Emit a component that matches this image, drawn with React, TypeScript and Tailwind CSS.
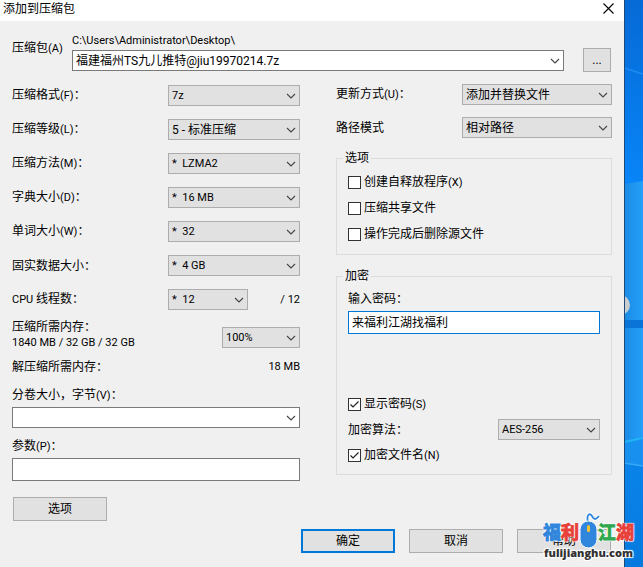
import { useId, type ReactNode } from "react";

/* Latin letters and digits are set one step smaller than the Han characters. */
function T({ children }: { children: string }) {
  return (
    <>
      {children.split(/([\x20-\x7e]+)/).map((run, i) =>
        i % 2 === 1 ? (
          <span key={i} className="text-[11px]">
            {run}
          </span>
        ) : (
          run
        ),
      )}
    </>
  );
}

function Chevron() {
  return (
    <svg className="h-[6px] w-[10px]" viewBox="0 0 10 6" fill="none" stroke="#444" strokeWidth="1.1" aria-hidden="true">
      <path d="M1 1 5 5 9 1" />
    </svg>
  );
}

function Select({ id, value, label, className = "" }: { id?: string; value: string; label?: string; className?: string }) {
  const latin = /^[\x20-\x7e\xa0]+$/.test(value);
  return (
    <span className={`relative block shrink-0 ${className}`}>
      <select
        id={id}
        aria-label={label}
        className={`block h-[21px] w-full appearance-none border border-[#adadad] bg-[#e1e1e1] pr-5 pl-[3px] ${latin ? "text-[11px]" : "text-[12px]"} leading-4`}
      >
        <option>{value}</option>
      </select>
      <span className="pointer-events-none absolute inset-y-0 right-1 flex items-center">
        <Chevron />
      </span>
    </span>
  );
}

function Combo({ id, value = "" }: { id: string; value?: string }) {
  return (
    <div className="flex h-[21px] items-center border border-[#7a7a7a] bg-white">
      <input id={id} defaultValue={value} className="h-4 min-w-0 flex-1 pl-[3px] leading-4 outline-none" />
      <button type="button" aria-label="展开" className="flex h-full items-center px-[3px]">
        <Chevron />
      </button>
    </div>
  );
}

function Field({ label, value, width = "w-[132px]", suffix }: { label: string; value: string; width?: string; suffix?: string }) {
  const id = useId();
  return (
    <div className="flex h-[21px] items-center">
      <label htmlFor={id} className="w-[156px] shrink-0">
        <T>{label}</T>
      </label>
      <Select id={id} value={value} className={width} />
      {suffix && <span className="flex-1 text-right text-[11px]">{suffix}</span>}
    </div>
  );
}

function Check({ label, checked = false }: { label: string; checked?: boolean }) {
  return (
    <label className="flex h-4 items-center gap-[3px]">
      <span className="relative block size-[13px]">
        <input
          type="checkbox"
          defaultChecked={checked}
          className="peer block size-[13px] appearance-none border border-[#333] bg-white"
        />
        <svg
          className="pointer-events-none absolute inset-0 hidden size-[13px] peer-checked:block"
          viewBox="0 0 13 13"
          fill="none"
          stroke="#222"
          strokeWidth="1.2"
          aria-hidden="true"
        >
          <path d="M2.5 6.5 5 9 10.5 3.5" />
        </svg>
      </span>
      <span>
        <T>{label}</T>
      </span>
    </label>
  );
}

function Group({ title, className = "", children }: { title: string; className?: string; children: ReactNode }) {
  return (
    <fieldset className={`border border-[#dcdcdc] px-[11px] ${className}`}>
      <legend className="-ml-[5px] px-0.5">{title}</legend>
      {children}
    </fieldset>
  );
}

function PushButton({ children, primary = false }: { children: ReactNode; primary?: boolean }) {
  return (
    <button
      type="button"
      className={`flex h-6 w-[94px] items-center justify-center bg-[#e1e1e1] leading-4 ${primary ? "border-2 border-[#0078d7]" : "border border-[#adadad]"}`}
    >
      {children}
    </button>
  );
}

function Desktop() {
  return (
    <div className="relative w-[19px] shrink-0 overflow-hidden bg-[#1c93f2]">
      <svg className="absolute inset-0 h-full w-full" viewBox="0 0 19 567" preserveAspectRatio="none" aria-hidden="true">
        <defs>
          <linearGradient id="sky" x1="0" y1="0" x2="0" y2="1">
            <stop offset="0" stopColor="#066ad6" />
            <stop offset="1" stopColor="#0885f8" />
          </linearGradient>
          <linearGradient id="pane" x1="0" y1="0" x2="1" y2="0">
            <stop offset="0" stopColor="#1b8ae4" />
            <stop offset="1" stopColor="#24a0fa" />
          </linearGradient>
          <linearGradient id="floor" x1="0" y1="0" x2="0" y2="1">
            <stop offset="0" stopColor="#0a84ea" />
            <stop offset="1" stopColor="#0579de" />
          </linearGradient>
        </defs>
        <rect width="19" height="184" fill="url(#sky)" />
        <path d="M0 68 19 74" stroke="#1f8cf0" strokeWidth="1.5" />
        <path d="M0 184 19 181V320H0Z" fill="url(#pane)" />
        <rect y="320" width="19" height="8" fill="#0a74d8" />
        <rect y="328" width="19" height="113" fill="url(#pane)" />
        <path d="M0 441 19 438V466L0 462Z" fill="#1890f0" />
        <path d="M0 463 19 466V567H0Z" fill="url(#floor)" />
        <path d="M0 442 19 438" stroke="#22b4f4" strokeWidth="2" />
        <path d="M0 463 19 466" stroke="#35a8f8" strokeWidth="1.5" />
        <circle cx="-4" cy="305" r="10" fill="#c9cdd0" />
        <rect width="1" height="567" fill="#1d4a78" />
      </svg>
    </div>
  );
}

function Watermark() {
  return (
    <div className="pointer-events-none absolute right-[9px] bottom-[6px] flex flex-col items-center font-bold [text-shadow:1px_1px_1px_#fff,-1px_-1px_1px_#fff,1px_-1px_1px_#fff,-1px_1px_1px_#fff]">
      <div className="flex h-8 items-end text-[18px] leading-6 [-webkit-text-stroke:1px_currentColor]">
        <span className="text-[#2f86dc]">福</span>
        <span className="text-[#e8413a]">利</span>
        <svg className="-mb-1 h-[36px] w-[19px] overflow-visible" viewBox="0 0 19 36" aria-hidden="true">
          <path d="M9 9C7 2 11-1 13 3S17 7 20 3" fill="none" stroke="#fff" strokeWidth="4" />
          <path d="M9 9C7 2 11-1 13 3S17 7 20 3" fill="none" stroke="#2f86dc" strokeWidth="1.8" />
          <rect x="1" y="8" width="17" height="27" rx="8.5" fill="#2f86dc" stroke="#fff" />
          <rect x="8" y="12" width="3" height="7" rx="1.5" fill="#f5c332" />
        </svg>
        <span className="text-[#2fa84f]">江</span>
        <span className="text-[#e8413a]">湖</span>
      </div>
      <span className="font-['Open_Sans',sans-serif] text-[11px] leading-4 font-extrabold text-[#333]">fulijianghu.com</span>
    </div>
  );
}

export default function App() {
  return (
    <div className="relative flex min-h-screen font-[Roboto,'Noto_Sans_CJK_SC',sans-serif] text-[12px] leading-4 text-black">
      <main className="flex min-w-0 flex-1 flex-col bg-[#f0f0f0]">
        <header className="flex h-[21px] items-center justify-between bg-white pr-[10px] pb-1 pl-[3px]">
          <h1>添加到压缩包</h1>
          <button type="button" aria-label="关闭">
            <svg className="size-[11px]" viewBox="0 0 11 11" stroke="#000" strokeWidth="1.1" aria-hidden="true">
              <path d="M.5.5 10.5 10.5M10.5.5.5 10.5" />
            </svg>
          </button>
        </header>

        <form className="flex flex-1 flex-col px-3 pt-3 pb-[14px]">
          <div className="flex items-end">
            <label htmlFor="archive" className="mb-[14px] w-[60px] shrink-0">
              <T>压缩包(A)</T>
            </label>
            <div className="min-w-0 flex-1">
              <p className="mb-px text-[11px]">C:\Users\Administrator\Desktop\</p>
              <Combo id="archive" value="福建福州TS九儿推特@jiu19970214.7z" />
            </div>
            <button type="button" className="-mb-px ml-[19px] mr-px h-6 w-7 border border-[#adadad] bg-[#e1e1e1] leading-4">
              ...
            </button>
          </div>

          <div className="mt-[13px] flex gap-9">
            <section className="flex min-w-0 flex-[288] flex-col pt-px">
              <div className="flex flex-col gap-[13px]">
                <Field label="压缩格式(F)：" value="7z" />
                <Field label="压缩等级(L)：" value="5 - 标准压缩" />
                <Field label="压缩方法(M)：" value={"*\u00a0\u00a0LZMA2"} />
                <Field label="字典大小(D)：" value={"*\u00a0\u00a016 MB"} />
                <Field label="单词大小(W)：" value={"*\u00a0\u00a032"} />
                <Field label="固实数据大小：" value={"*\u00a0\u00a04 GB"} />
                <Field label="CPU 线程数：" value={"*\u00a0\u00a012"} width="w-[80px]" suffix="/ 12" />
              </div>
              <div className="mt-[9px] flex items-start justify-between">
                <div>
                  <p>压缩所需内存：</p>
                  <p className="text-[11px]">1840 MB / 32 GB / 32 GB</p>
                </div>
                <Select label="压缩所需内存" value="100%" className="mt-2 w-[78px]" />
              </div>
              <p className="mt-2 flex justify-between">
                <span>解压缩所需内存：</span>
                <span className="text-[11px]">18 MB</span>
              </p>
              <label htmlFor="volume" className="mt-3 mb-[3px]">
                <T>分卷大小，字节(V)：</T>
              </label>
              <Combo id="volume" />
              <label htmlFor="params" className="mt-[10px] mb-[3px]">
                <T>参数(P)：</T>
              </label>
              <input id="params" className="h-[23px] border border-[#7a7a7a] bg-white px-[3px]" />
              <div className="mt-4 ml-px">
                <PushButton>选项</PushButton>
              </div>
            </section>

            <section className="flex min-w-0 flex-[276] flex-col">
              <div className="flex items-center justify-between">
                <label htmlFor="update">
                  <T>更新方式(U)：</T>
                </label>
                <Select id="update" value="添加并替换文件" className="w-[150px]" />
              </div>
              <div className="mt-3 flex items-center justify-between">
                <label htmlFor="paths">路径模式</label>
                <Select id="paths" value="相对路径" className="w-[150px]" />
              </div>
              <Group title="选项" className="mt-3 pt-2 pb-3">
                <div className="flex flex-col gap-[10px]">
                  <Check label="创建自释放程序(X)" />
                  <Check label="压缩共享文件" />
                  <Check label="操作完成后删除源文件" />
                </div>
              </Group>
              <Group title="加密" className="mt-[13px] pt-[7px] pb-[11px]">
                <label htmlFor="password" className="block">
                  输入密码：
                </label>
                <input
                  id="password"
                  defaultValue="来福利江湖找福利"
                  className="mt-1 mb-[62px] block h-[23px] w-full border border-[#0078d7] bg-white px-[3px] pb-0.5 leading-4 outline-none"
                />
                <Check label="显示密码(S)" checked />
                <div className="my-[7px] flex items-center justify-between">
                  <label htmlFor="method">加密算法：</label>
                  <Select id="method" value="AES-256" className="w-[102px]" />
                </div>
                <Check label="加密文件名(N)" checked />
              </Group>
            </section>
          </div>

          <footer className="mt-2 mr-px flex justify-end gap-[14px]">
            <PushButton primary>确定</PushButton>
            <PushButton>取消</PushButton>
            <PushButton>帮助</PushButton>
          </footer>
        </form>
      </main>
      <Desktop />
      <Watermark />
    </div>
  );
}
